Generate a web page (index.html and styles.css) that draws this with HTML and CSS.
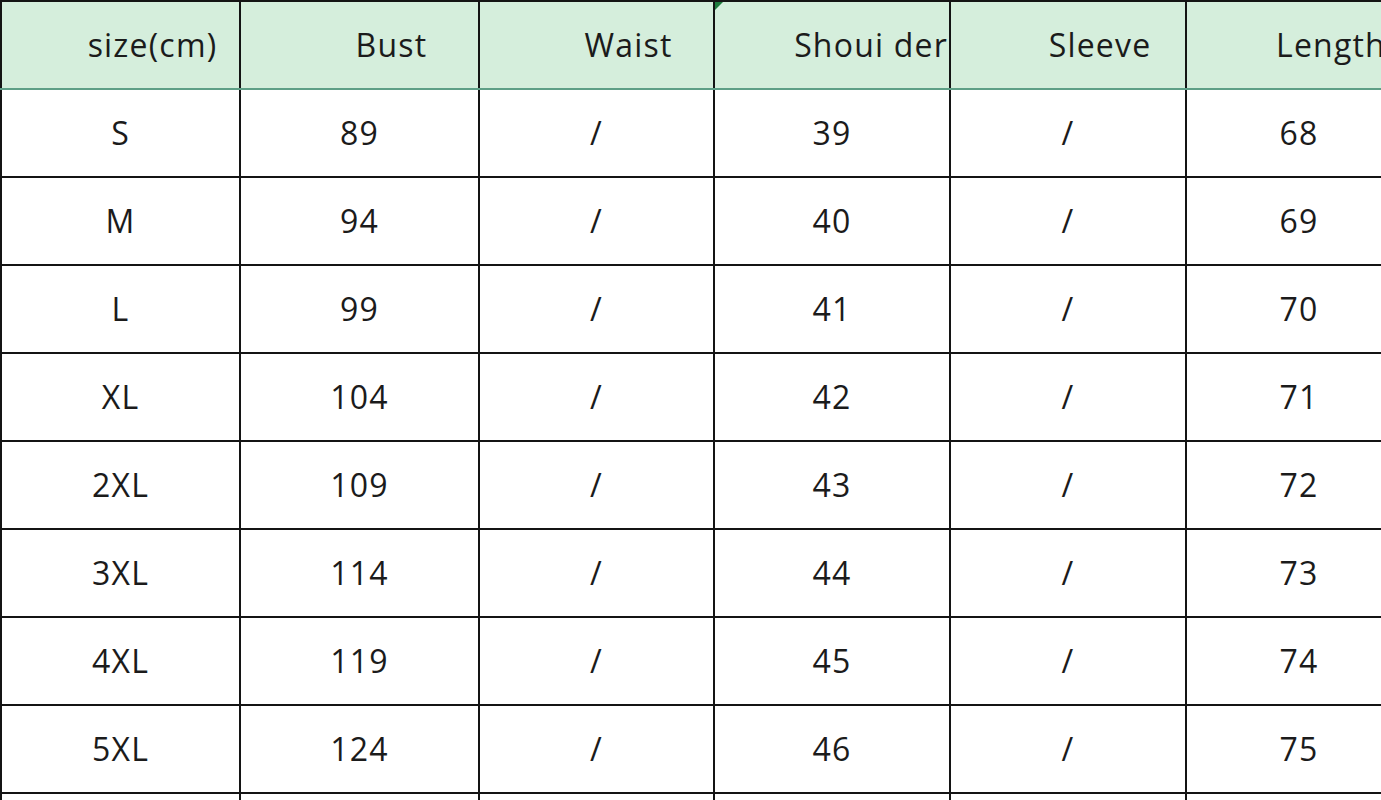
FILE: index.html
```html
<!DOCTYPE html>
<html>
<head>
<meta charset="utf-8">
<link rel="stylesheet" href="styles.css">
</head>
<body>
<div class="sheet">
  <table class="size-table">
    <colgroup>
      <col class="c1"><col class="c2"><col class="c3"><col class="c4"><col class="c5"><col class="c6">
    </colgroup>
    <thead>
      <tr>
        <th>size(cm)</th>
        <th>Bust</th>
        <th>Waist</th>
        <th class="marked">Shoui der<span class="flag"></span></th>
        <th>Sleeve</th>
        <th>Length</th>
      </tr>
    </thead>
    <tbody>
      <tr><td>S</td><td>89</td><td>/</td><td>39</td><td>/</td><td>68</td></tr>
      <tr><td>M</td><td>94</td><td>/</td><td>40</td><td>/</td><td>69</td></tr>
      <tr><td>L</td><td>99</td><td>/</td><td>41</td><td>/</td><td>70</td></tr>
      <tr><td>XL</td><td>104</td><td>/</td><td>42</td><td>/</td><td>71</td></tr>
      <tr><td>2XL</td><td>109</td><td>/</td><td>43</td><td>/</td><td>72</td></tr>
      <tr><td>3XL</td><td>114</td><td>/</td><td>44</td><td>/</td><td>73</td></tr>
      <tr><td>4XL</td><td>119</td><td>/</td><td>45</td><td>/</td><td>74</td></tr>
      <tr><td>5XL</td><td>124</td><td>/</td><td>46</td><td>/</td><td>75</td></tr>
      <tr><td></td><td></td><td></td><td></td><td></td><td></td></tr>
    </tbody>
  </table>
</div>
</body>
</html>
```

FILE: styles.css
```css
html, body {
  margin: 0;
  padding: 0;
  background: #ffffff;
}

.sheet {
  width: 1381px;
  height: 800px;
  overflow: hidden;
}

.size-table {
  table-layout: fixed;
  border-collapse: collapse;
  width: 1411px;
  font-family: "Open Sans", "Liberation Sans", sans-serif;
  font-size: 32px;
  line-height: 40px;
  letter-spacing: 1.2px;
  color: #1b1b1b;
}

.c1 { width: 239px; }
.c2 { width: 239px; }
.c3 { width: 235px; }
.c4 { width: 236px; }
.c5 { width: 236px; }
.c6 { width: 226px; }

.size-table th,
.size-table td {
  border: 2px solid #141414;
  text-align: center;
  vertical-align: middle;
  white-space: nowrap;
  overflow: hidden;
  padding: 0;
}

.size-table th {
  height: 86px;
  background: #d5eedc;
  font-weight: 400;
  padding-left: 64px;
  border-bottom: 2px solid #5e9f86;
}

.size-table td {
  height: 86px;
}

.size-table th.marked {
  position: relative;
  text-align: right;
  padding-right: 1px;
}

.flag {
  position: absolute;
  left: 0;
  top: 0;
  width: 0;
  height: 0;
  border-top: 8px solid #1e7a3c;
  border-right: 8px solid transparent;
}
```
